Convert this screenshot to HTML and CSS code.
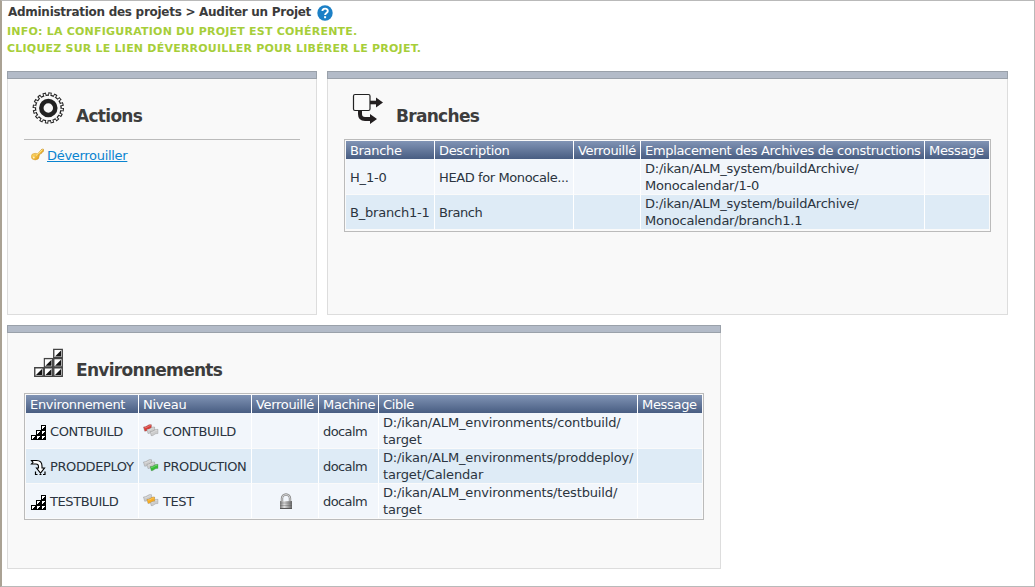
FILE: index.html
```html
<!DOCTYPE html>
<html lang="fr">
<head>
<meta charset="utf-8">
<title>Auditer un Projet</title>
<link rel="stylesheet" href="styles.css">
</head>
<body>
<svg class="defs" width="0" height="0">
  <defs>
    <linearGradient id="gold" x1="0" y1="0" x2="1" y2="1"><stop offset="0" stop-color="#ffe27a"/><stop offset="1" stop-color="#e29a10"/></linearGradient>
    <linearGradient id="steel" x1="0" y1="0" x2="1" y2="0"><stop offset="0" stop-color="#777"/><stop offset=".35" stop-color="#ddd"/><stop offset="1" stop-color="#666"/></linearGradient>
    <symbol id="tile" viewBox="0 0 10 10"><path d="M.75.75h8.5v8.5H.75z" fill="#fff" stroke="#444" stroke-width="1.4"/><path d="M8 2v6H2z" fill="#151515"/></symbol>
    <symbol id="stairs" viewBox="0 0 16 16"><path d="M1 16v-5h5V6h5V1h5v15z" fill="#000"/><path d="M12 2h3v1h-1v1h-1v1h-1zM7 7h3v1H9v1H8v1H7zM12 7h3v1h-1v1h-1v1h-1zM2 12h3v1H4v1H3v1H2zM7 12h3v1H9v1H8v1H7zM12 12h3v1h-1v1h-1v1h-1z" fill="#fff"/></symbol>
    <symbol id="flag" viewBox="0 0 9 8"><path d="M.4 3Q3 3 4.500 1.600T8.500.7V4.900Q6 4.700 4.700 6T1.700 7.300z" fill="currentColor" stroke="#777" stroke-opacity=".5" stroke-width=".6"/><path d="M1.500 3.900Q4 3.500 5 2.600T7.700 1.600" fill="none" stroke="#fff" stroke-opacity=".3"/></symbol>
  </defs>
</svg>
<main class="frame">
  <div class="crumb"><span>Administration des projets &gt; Auditer un Projet</span>
    <svg class="help" viewBox="0 0 16 16"><circle cx="8" cy="8" r="7.700" fill="#1c80c6"/><path d="M5.400 6.100C5.400 2.800 10.800 2.800 10.800 6c0 2-2.700 2-2.700 4" fill="none" stroke="#fff" stroke-width="1.900"/><path d="M7.100 11.200h2v2h-2z" fill="#fff"/></svg>
  </div>
  <div class="info"><div>INFO: LA CONFIGURATION DU PROJET EST COHÉRENTE.</div><div>CLIQUEZ SUR LE LIEN DÉVERROUILLER POUR LIBÉRER LE PROJET.</div></div>
  <div class="row">
    <section class="panel actions">
      <header class="head"><svg class="big gear" viewBox="0 0 32 32"><circle cx="16.300" cy="16" r="13.500" fill="#222"/><circle cx="16.300" cy="16" r="13.900" fill="none" stroke="#222" stroke-width="3.600" pathLength="320" stroke-dasharray="12 8"/><circle cx="16.300" cy="16" r="13.200" fill="none" stroke="#f9f9f9" stroke-width="2.800" pathLength="320" stroke-dasharray="6 14" stroke-dashoffset="-3"/><circle cx="16.300" cy="16" r="12.200" fill="#f9f9f9"/><circle cx="16.300" cy="16" r="7" fill="none" stroke="#222" stroke-width="4.500"/></svg><h2>Actions</h2></header>
      <div class="links"><svg class="key" viewBox="0 0 13 13"><path d="M6 6.500 11 1l1.700.4-.5 2.400-1.100.2-.4 1.300-1.100.2L7.500 8.500z" fill="#f5bd38" stroke="#bd8319" stroke-width=".6"/><ellipse cx="4.200" cy="8.600" rx="3.900" ry="3.300" fill="url(#gold)" stroke="#d2952a" stroke-width=".5"/><circle cx="2.800" cy="9.500" r=".9" fill="#fff1c6"/><path d="m5 7.500 6.500-6" stroke="#ffe995"/></svg><a href="#">Déverrouiller</a></div>
    </section>
    <section class="panel branches">
      <header class="head"><svg class="big" viewBox="0 0 32 32"><path d="M8 18v4q0 5 5 5h5" fill="none" stroke="#231f20" stroke-width="4"/><path d="M18 22v10l7-5zM24 5.500v10l7-5z" fill="#231f20"/><path d="M17 10.500h9" stroke="#231f20" stroke-width="3.600"/><rect x="1.500" y="2.500" width="16.500" height="16" rx="1.500" fill="#fafafa" stroke="#222" stroke-width="1.200"/></svg><h2>Branches</h2></header>
      <table class="grid">
        <colgroup><col class="w89"><col class="w139"><col class="w67"><col class="w284"><col class="w64"></colgroup>
        <thead><tr><th>Branche</th><th>Description</th><th>Verrouillé</th><th>Emplacement des Archives de constructions</th><th>Message</th></tr></thead>
        <tbody>
          <tr class="tall"><td class="id">H_1-0</td><td>HEAD for Monocale...</td><td></td><td class="path">D:/ikan/ALM_system/buildArchive/<br>Monocalendar/1-0</td><td></td></tr>
          <tr class="alt"><td class="id">B_branch1-1</td><td>Branch</td><td></td><td class="path">D:/ikan/ALM_system/buildArchive/<br>Monocalendar/branch1.1</td><td></td></tr>
        </tbody>
      </table>
    </section>
  </div>
  <section class="panel envs">
    <header class="head"><svg class="big" viewBox="0 0 32 32"><use href="#tile" x="21" y="2.500" width="10" height="10"/><use href="#tile" x="11.500" y="11.800" width="10" height="10"/><use href="#tile" x="21" y="11.800" width="10" height="10"/><use href="#tile" x="2" y="21" width="10" height="10"/><use href="#tile" x="11.500" y="21" width="10" height="10"/><use href="#tile" x="21" y="21" width="10" height="10"/></svg><h2>Environnements</h2></header>
    <table class="grid">
      <colgroup><col class="w113"><col class="w113"><col class="w67"><col class="w60"><col class="w259"><col class="w64"></colgroup>
      <thead><tr><th>Environnement</th><th>Niveau</th><th>Verrouillé</th><th>Machine</th><th>Cible</th><th>Message</th></tr></thead>
      <tbody>
        <tr class="tall"><td><div class="cell"><svg class="ico low" viewBox="0 0 16 16"><use href="#stairs"/></svg>CONTBUILD</div></td><td><div class="cell"><svg class="ico" viewBox="0 0 16 16"><g color="#d93a35"><use href="#flag" x="0" y="1" width="9" height="8"/></g><g color="#ccc"><use href="#flag" x="3.300" y="3.300" width="9" height="8"/><use href="#flag" x="6.600" y="5.600" width="9" height="8"/></g></svg>CONTBUILD</div></td><td></td><td class="host">docalm</td><td class="path env">D:/ikan/ALM_environments/contbuild/<br>target</td><td></td></tr>
        <tr class="alt"><td><div class="cell"><svg class="ico low" viewBox="0 0 16 16"><path d="M1.500 1.500h5Q12 1.500 12 7v2h2.500L10.500 14 6.500 9h2V7.500Q8.500 5 6 5H1.500l1.500-1.700z" fill="#fff" stroke="#000" stroke-width="1.100"/><path d="M5.500 12.500v3h2M13 15.500h2v-3M9.500 15.500h2" fill="none" stroke="#000" stroke-width="1.200"/></svg>PRODDEPLOY</div></td><td><div class="cell"><svg class="ico" viewBox="0 0 16 16"><g color="#ccc"><use href="#flag" x="0" y="1" width="9" height="8"/><use href="#flag" x="3.300" y="3.300" width="9" height="8"/></g><g color="#35bd35"><use href="#flag" x="6.600" y="5.600" width="9" height="8"/></g></svg>PRODUCTION</div></td><td></td><td class="host">docalm</td><td class="path env">D:/ikan/ALM_environments/proddeploy/<br>target/Calendar</td><td></td></tr>
        <tr class="last"><td><div class="cell"><svg class="ico low" viewBox="0 0 16 16"><use href="#stairs"/></svg>TESTBUILD</div></td><td><div class="cell"><svg class="ico" viewBox="0 0 16 16"><g color="#ccc"><use href="#flag" x="0" y="1" width="9" height="8"/><use href="#flag" x="6.600" y="5.600" width="9" height="8"/></g><g color="#f7ad22"><use href="#flag" x="3.300" y="3.300" width="9" height="8"/></g></svg>TEST</div></td><td><svg class="lock" viewBox="0 0 16 16"><path d="M4 8V5.500a4 4 0 0 1 8 0V8" fill="none" stroke="#888" stroke-width="2.400"/><path d="M4 8V5.500a4 4 0 0 1 8 0V8" fill="none" stroke="#ddd" stroke-width=".9"/><path d="M2 8h12v8H2z" fill="url(#steel)"/><path d="M2 10h12M2 12.500h12" stroke="#555" stroke-opacity=".35"/><path d="M2 15.500h12" stroke="#555"/></svg></td><td class="host">docalm</td><td class="path env">D:/ikan/ALM_environments/testbuild/<br>target</td><td></td></tr>
      </tbody>
    </table>
  </section>
</main>
</body>
</html>
```
FILE: styles.css
```css
*, *::before { box-sizing: border-box; }
body { margin: 0; background: #fff; font: 13px/17px Verdana, "DejaVu Sans", sans-serif; color: #2b3440; }
.defs { display: block; height: 0; }
.frame { width: 1035px; height: 587px; padding: 3px 0 0 5px; border: 1px solid #b9b9b9; border-left: 2px solid #aaa294; overflow: hidden; }
.crumb { display: flex; align-items: center; gap: 6px; height: 17px; padding-left: 1px; font-size: 12px; font-weight: bold; color: #3b3b3b; white-space: nowrap; letter-spacing: -.28px; }
.help { width: 16px; height: 16px; }
.info { height: 50px; padding-top: 2px; font-size: 11px; font-weight: bold; color: #a6ce39; white-space: nowrap; letter-spacing: .22px; }
.row { display: flex; gap: 10px; margin-bottom: 10px; }
.panel { height: 244px; padding: 13px 16px 0; background: #f9f9f9; border: 1px solid #ddd; border-top: 0; position: relative; }
.panel::before { content: ""; position: absolute; top: 0; left: -1px; right: -1px; height: 8px; background: #b3bbc8; border: 1px solid #9aa1aa; }
.actions { width: 310px; }
.branches { width: 681px; }
.envs { width: 714px; }
.head { display: flex; height: 55px; padding: 8px 0 0 8px; gap: 12px; }
.big { width: 32px; height: 32px; flex: none; }
h2 { margin: 12px 0 0; font-size: 17px; line-height: 24px; letter-spacing: -.7px; color: #3d3d3d; white-space: nowrap; }
.links { display: flex; border-top: 1px solid #bbb; padding: 7px 0 0 7px; gap: 3px; letter-spacing: -.3px; }
.key { width: 13px; height: 13px; margin-top: 1px; }
a { color: #0a84d0; }
.grid { table-layout: fixed; border-spacing: 0; border: 1px solid #bbb; background: #fafafa; padding: 1px; white-space: nowrap; margin: 0; }
.branches .grid { width: 647px; }
.envs .grid { width: 680px; }
th, td { padding: 0 0 0 4px; text-align: left; border-right: 1px solid #fff; letter-spacing: -.4px; }
th:last-child, td:last-child { border-right: 0; }
th { height: 18px; font-weight: normal; letter-spacing: -.32px; color: #fff; background: linear-gradient(#8194b5, #485d82); background-clip: padding-box; }
td { height: 34px; background: #f2f6fb; background-clip: padding-box; border-bottom: 1px solid #fafafa; }
tr.tall td { height: 36px; padding-top: 1px; }
tr.alt td { background-color: #deebf6; }
tr.last td { border-bottom: 0; }
td.id { letter-spacing: -.2px; }
td.path { letter-spacing: -.22px; }
td.env { letter-spacing: -.15px; }
td.host { letter-spacing: -.6px; }
.w89 { width: 89px; } .w139 { width: 139px; } .w67 { width: 67px; } .w284 { width: 284px; } .w64 { width: 64px; }
.w113 { width: 113px; } .w60 { width: 60px; } .w259 { width: 259px; }
.cell { display: flex; align-items: center; gap: 4px; }
.ico { width: 16px; height: 16px; flex: none; }
.low { margin-top: 1px; }
.lock { display: block; width: 16px; height: 16px; margin-left: 22px; }
```
